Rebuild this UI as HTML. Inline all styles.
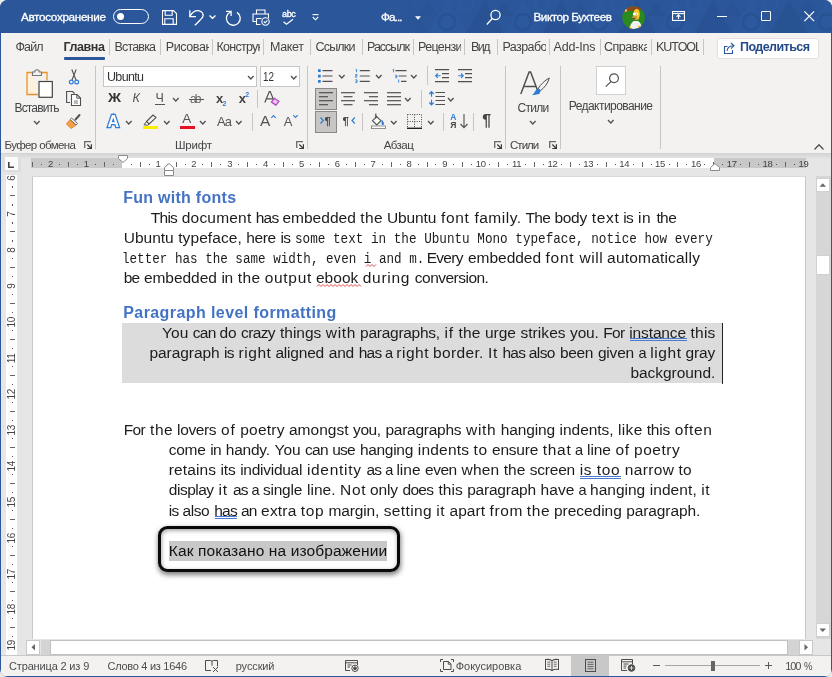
<!DOCTYPE html>
<html lang="ru">
<head>
<meta charset="utf-8">
<title>Word</title>
<style>
*{box-sizing:border-box;margin:0;padding:0}
html,body{width:832px;height:677px;overflow:hidden;background:#ececec}
body{font-family:"Liberation Sans",sans-serif;color:#444;position:relative}
.abs,.win *{position:absolute}
.win{position:absolute;left:0;top:0;width:832px;height:677px;background:#2b579a;border-radius:8px;overflow:hidden;will-change:transform}
.t{white-space:nowrap;line-height:1}
svg{overflow:visible}

/* title bar */
#title{left:0;top:0;width:832px;height:33px;background:#2b579a}
#title .t{color:#fff;font-size:12px;-webkit-text-stroke:0.300px #fff}

/* tabs */
#tabs{left:1px;top:33px;width:830px;height:28px;background:#f3f2f1}
#tabs .tab{top:8px;font-size:13px;color:#444;white-space:nowrap;overflow:hidden;height:16px;line-height:14px;letter-spacing:-0.2px}
#tabs .sep{top:6px;width:1px;height:16px;background:#c8c6c4}

/* ribbon */
#ribbon{left:1px;top:61px;width:830px;height:92px;background:#f3f2f1}
#ribbon .gsep{top:5px;width:1px;height:83px;background:#c8c6c4}
#ribbon .glabel{top:79px;font-size:11px;color:#444;white-space:nowrap;line-height:12px;letter-spacing:0.35px}
#ribbon .lbl{font-size:12px;color:#444;white-space:nowrap;line-height:12px}

/* ruler area */
#rulerbar{left:1px;top:152.500px;width:830px;height:18.500px;background:linear-gradient(#d2d2d2 0,#dcdcdc 3px,#e3e3e3 5.500px,#e6e6e6 6px);z-index:3}

/* doc */
#doc{left:1px;top:171px;width:830px;height:484px;background:#e6e6e6}
#page{left:32px;top:0;width:773px;height:468px;background:#fff;border-left:1px solid #c6c6c6;border-right:1px solid #c6c6c6}
.ln{white-space:nowrap;font-size:16px;line-height:20px;height:20px;color:#1a1a1a}
.mono{font-family:"Liberation Mono",monospace;position:static!important}
.h{font-weight:bold;color:#3f6fc6}

/* status */
#status{left:1px;top:655px;width:830px;height:21px;background:#f3f2f1;border-top:1px solid #c8c8c8}
#status .t{font-size:11px;color:#444;top:5px}
</style>
</head>
<body>
<div class="win">

<div id="title">
<!-- faint pattern -->
<svg style="left:390px;top:0" width="442" height="33" viewBox="0 0 442 33">
<defs><pattern id="tp" width="76" height="33" patternUnits="userSpaceOnUse">
<polygon points="0,33 19,0 38,33" fill="#244c8a"/>
<polygon points="38,33 57,0 76,33" fill="#2f5ea3"/>
<polygon points="19,0 57,0 38,33" fill="#27529200"/>
<polygon points="28,16 38,0 48,16" fill="#244c8a" opacity=".8"/>
<circle cx="57" cy="22" r="8" fill="none" stroke="#244c8a" stroke-width="3"/>
<circle cx="0" cy="4" r="7" fill="none" stroke="#2f5ea3" stroke-width="2.500"/>
<circle cx="76" cy="4" r="7" fill="none" stroke="#2f5ea3" stroke-width="2.500"/>
</pattern>
<linearGradient id="tg" x1="0" x2="1" y1="0" y2="0"><stop offset="0" stop-color="#fff" stop-opacity="0"/><stop offset=".12" stop-color="#fff" stop-opacity="1"/></linearGradient>
<mask id="tm"><rect width="442" height="33" fill="url(#tg)"/></mask></defs>
<rect width="442" height="33" fill="url(#tp)" opacity=".38" mask="url(#tm)"/>
</svg>
<div class="t" style="left:21.00px;top:11.00px;font-size:11.7px;letter-spacing:-0.322px;color:#fff;">Автосохранение</div>
<div style="left:113px;top:9px;width:36px;height:15px;border:1px solid #fff;border-radius:8px"></div>
<div style="left:117px;top:13px;width:7px;height:7px;border-radius:50%;background:#fff"></div>
<!-- save -->
<svg style="left:161px;top:10px" width="16" height="15" viewBox="0 0 16 15" fill="none" stroke="#fff" stroke-width="1.1"><path d="M1.5 0.6h11l3 3v10.8h-14z"/><path d="M4.2 0.6v4.6h7v-4.6"/><path d="M3.8 14.4v-5.6h8.4v5.6"/></svg>
<!-- undo -->
<svg style="left:189px;top:10px" width="16" height="16" viewBox="0 0 16 16" fill="none" stroke="#fff" stroke-width="1.3"><path d="M0.800 0.300v6.300h6.200"/><path d="M1 6.300C3 2.600 6.800 0.200 10.300 0.800c3 0.600 4.500 3.400 3.500 5.900c-0.700 1.700-3 3.700-8.100 8.700"/></svg>
<svg style="left:208.500px;top:14.700px" width="7" height="4" viewBox="0 0 7 4" fill="none" stroke="#fff" stroke-width="1.3"><path d="M0.500 0.500l3 2.800 3-2.800"/></svg>
<!-- redo -->
<svg style="left:224px;top:9px" width="18" height="18" viewBox="0 0 18 18" fill="none" stroke="#fff" stroke-width="1.3"><path d="M12.98 3.41A6.95 6.95 0 1 1 6.70 2.86"/><path d="M2 2.400h5.100v4.700"/></svg>
<!-- print preview -->
<svg style="left:252px;top:9px" width="19" height="17" viewBox="0 0 19 17" fill="none" stroke="#fff" stroke-width="1.1"><path d="M4.500 5v-4h8.500v4"/><path d="M4 12.500h-3v-7.500h15.500v4"/><path d="M4.500 9.500v6h4"/><path d="M4.500 9.500h5"/><circle cx="13.500" cy="12.500" r="3.700"/><path d="M11.800 12.500l1.300 1.300 2.300-2.500"/></svg>
<!-- abc check -->
<div class="t" style="left:282px;top:9.500px;font-size:9px;letter-spacing:-0.35px">abc</div>
<svg style="left:282.500px;top:19px" width="11" height="6" viewBox="0 0 11 6" fill="none" stroke="#fff" stroke-width="1.2"><path d="M0.500 2.800l3 2.500 6.500-5"/></svg>
<!-- customize -->
<svg style="left:312px;top:13.500px" width="7" height="7" viewBox="0 0 7 7" fill="none" stroke="#fff" stroke-width="1.1"><path d="M0.500 0.600h6"/><path d="M0.800 3l2.700 2.800 2.700-2.800"/></svg>
<div class="t" style="left:381.00px;top:11.00px;font-size:11.7px;letter-spacing:-0.913px;color:#fff;">Фа...</div>
<svg style="left:415px;top:15.500px" width="6" height="4" viewBox="0 0 6 4"><path d="M0 0.300h6l-3 3.500z" fill="#fff"/></svg>
<!-- search -->
<svg style="left:486px;top:9px" width="16" height="17" viewBox="0 0 16 17" fill="none" stroke="#fff" stroke-width="1.3"><circle cx="9.500" cy="6" r="4.600"/><path d="M6.300 9.500l-5.500 6"/></svg>
<div class="t" style="left:533.50px;top:11.00px;font-size:11.7px;letter-spacing:-0.464px;color:#fff;">Виктор Бухтеев</div>
<!-- avatar -->
<svg style="left:622px;top:5.500px" width="23.200" height="23.200" viewBox="0 0 23.200 23.200"><defs><clipPath id="av"><circle cx="11.600" cy="11.600" r="11.300"/></clipPath></defs><g clip-path="url(#av)"><rect width="24" height="24" fill="#2b8a1d"/><path d="M0 0h24v5.200c-3-2-6-1.800-9-0.800c-3 1-6 0.300-8 0.500c-3 0.300-5 1-7 2z" fill="#8b4a20"/><ellipse cx="3.800" cy="4.300" rx="1.300" ry="1.600" fill="#e8b58a"/><ellipse cx="14.700" cy="8.300" rx="3.100" ry="5.600" fill="#f7c81a"/><ellipse cx="12.700" cy="11.800" rx="2.500" ry="2.200" fill="#c79a3c"/><path d="M10.600 12.300h2.500v0.900h-2.500z" fill="#3a2a10"/><circle cx="12.300" cy="8.100" r="1.500" fill="#fff"/><circle cx="14.700" cy="7.900" r="1.400" fill="#fff"/><circle cx="14.300" cy="8" r="0.450" fill="#222"/><path d="M7.500 23.500c0.300-4.500 2-7.300 4.200-8.600h4.300c2.500 1.500 3.800 4 3.800 8.600z" fill="#f1f1f1"/><ellipse cx="17.300" cy="20.600" rx="1.800" ry="1" fill="#f7c81a"/><ellipse cx="8.300" cy="21.500" rx="0.900" ry="1" fill="#f7c81a"/></g></svg>
<!-- ribbon display -->
<svg style="left:672px;top:11px" width="13" height="10" viewBox="0 0 13 10" fill="none" stroke="#fff" stroke-width="1.100"><rect x="0.550" y="0.550" width="11.900" height="8.900"/><path d="M0.500 2.600h12"/><path d="M6.500 8v-4M4.500 5.800l2-2 2 2"/></svg>
<!-- min max close -->
<div style="left:717px;top:16px;width:10px;height:1px;background:#fff"></div>
<div style="left:761px;top:11px;width:10px;height:10px;border:1px solid #fff;border-radius:1px"></div>
<svg style="left:804px;top:11px" width="10.500" height="10.500" viewBox="0 0 10.500 10.500" stroke="#fff" stroke-width="1.200"><path d="M0.400 0.400l9.700 9.700M10.100 0.400l-9.700 9.700"/></svg>
</div>
<div id="tabs">
<div class="t" style="left:14.50px;top:8.42px;font-size:12.5px;letter-spacing:-0.910px;">Файл</div>
<div class="t" style="left:113.50px;top:8.42px;font-size:12.5px;letter-spacing:-0.827px;">Вставка</div>
<div class="t" style="left:269.00px;top:8.42px;font-size:12.5px;letter-spacing:-0.344px;">Макет</div>
<div class="t" style="left:314.50px;top:8.42px;font-size:12.5px;letter-spacing:-0.801px;">Ссылки</div>
<div class="t" style="left:470.00px;top:8.42px;font-size:12.5px;letter-spacing:-1.557px;">Вид</div>
<div class="t" style="left:552.50px;top:8.42px;font-size:12.5px;letter-spacing:-0.180px;">Add-Ins</div>
<div class="t" style="left:164.75px;top:8.42px;font-size:12.5px;letter-spacing:-0.394px;width:43.200px;overflow:hidden;height:15px;">Рисование</div>
<div class="t" style="left:215.50px;top:8.42px;font-size:12.5px;letter-spacing:-0.739px;width:43.200px;overflow:hidden;height:15px;">Конструктор</div>
<div class="t" style="left:366.00px;top:8.42px;font-size:12.5px;letter-spacing:-1.025px;width:43.200px;overflow:hidden;height:15px;">Рассылки</div>
<div class="t" style="left:417.00px;top:8.42px;font-size:12.5px;letter-spacing:-0.641px;width:43.200px;overflow:hidden;height:15px;">Рецензирование</div>
<div class="t" style="left:501.50px;top:8.42px;font-size:12.5px;letter-spacing:-0.588px;width:43.200px;overflow:hidden;height:15px;">Разработчик</div>
<div class="t" style="left:603.00px;top:8.42px;font-size:12.5px;letter-spacing:-0.468px;width:43.200px;overflow:hidden;height:15px;">Справка</div>
<div class="t" style="left:655.00px;top:8.42px;font-size:12.5px;letter-spacing:-1.044px;width:43.200px;overflow:hidden;height:15px;">KUTOOLS</div>
<div class="t" style="left:62.50px;top:8.42px;font-size:12.5px;font-weight:bold;letter-spacing:-0.424px;color:#333;width:41.300px;overflow:hidden;height:15px;">Главная</div>
<div style="left:62.5px;top:24px;width:41.5px;height:2.5px;background:#2b579a;border-radius:1px"></div>
<div class="sep" style="left:108.0px"></div>
<div class="sep" style="left:158.5px"></div>
<div class="sep" style="left:211.0px"></div>
<div class="sep" style="left:261.75px"></div>
<div class="sep" style="left:308.75px"></div>
<div class="sep" style="left:360.5px"></div>
<div class="sep" style="left:411.5px"></div>
<div class="sep" style="left:463.0px"></div>
<div class="sep" style="left:495.5px"></div>
<div class="sep" style="left:548.0px"></div>
<div class="sep" style="left:598.5px"></div>
<div class="sep" style="left:649.5px"></div>
<div class="sep" style="left:702.0px"></div>
<div style="left:716px;top:4.5px;width:102px;height:21px;background:#fff;border:1px solid #e3e1df;border-radius:3px"></div>
<svg style="left:723px;top:9px" width="11" height="12" viewBox="0 0 11 12" fill="none" stroke="#2b579a" stroke-width="1.1"><path d="M3.500 4.500h-3v7h8v-3.500"/><path d="M3 9c0.500-3 2.500-5 6-5.200"/><path d="M7 1l3 2.800-3 2.800"/></svg>
<div class="t" style="left:739.00px;top:8.42px;font-size:12.5px;font-weight:bold;letter-spacing:-0.558px;color:#244a86;">Поделиться</div>
</div>
<div id="ribbon">
<svg style="left:25.00px;top:8.00px" width="27" height="29" viewBox="0 0 27 29" ><path d="M6.500 3.500h-5.500v22h11" fill="#fdf0dd" stroke="#e8912d" stroke-width="1.300"/><path d="M15 3.500h6v8" fill="none" stroke="#e8912d" stroke-width="1.300"/><path d="M6.500 6.500v-3.500h2.200a2.300 2.300 0 0 1 4.600 0h2.200v3.500z" fill="#f3f2f1" stroke="#777" stroke-width="1.100"/><rect x="13" y="12.500" width="13.300" height="15.800" fill="#fff" stroke="#444" stroke-width="1.200"/></svg>
<div class="t" style="left:13.50px;top:40.84px;font-size:12px;letter-spacing:-0.838px;">Вставить</div>
<svg style="left:32.95px;top:59.80px" width="5.6" height="3" viewBox="0 0 5.6 3" fill="none" stroke="#505050" stroke-width="1.3"><path d="M0 0l2.8 3 2.8-3"/></svg>
<svg style="left:67.50px;top:7.50px" width="10" height="16" viewBox="0 0 10 16" ><path d="M2.800 0.500l4.200 10.500M7.200 0.500l-4.200 10.500" fill="none" stroke="#505050" stroke-width="1.100"/><circle cx="2.300" cy="13" r="1.900" fill="none" stroke="#2e7cd6" stroke-width="1.200"/><circle cx="7.700" cy="13" r="1.900" fill="none" stroke="#2e7cd6" stroke-width="1.200"/></svg>
<svg style="left:64.50px;top:30.00px" width="16" height="15" viewBox="0 0 16 15" ><path d="M4 11.500h-3.400v-11h6l2 2" fill="none" stroke="#505050" stroke-width="1.100"/><path d="M5.500 3.500h5.500l3.500 3.500v7.500h-9z" fill="#fff" stroke="#505050" stroke-width="1.100"/><path d="M10.800 3.700v3.500h3.500" fill="none" stroke="#505050" stroke-width="1"/><path d="M8 10h4M8 12h4" stroke="#505050" stroke-width="0.800"/></svg>
<svg style="left:65.00px;top:52.50px" width="15" height="15" viewBox="0 0 15 15" ><path d="M9.500 5.500l4-4.500" stroke="#555" stroke-width="2" stroke-linecap="round"/><path d="M5.500 4l6 5.500-1.300 1.500-6-5.500z" fill="#fff" stroke="#555" stroke-width="0.900"/><path d="M3.800 6l5.800 5.300-4.600 3.200-4.500-4.500z" fill="#f4a14a" stroke="#e07d1f" stroke-width="0.900"/></svg>
<div class="t" style="left:3.50px;top:79.27px;font-size:11.5px;letter-spacing:-0.604px;">Буфер обмена</div>
<svg style="left:83.00px;top:80.00px" width="8" height="8" viewBox="0 0 8 8" ><path d="M0.700 7v-6.300h6.300" fill="none" stroke="#6a6a6a" stroke-width="1.300"/><path d="M3.300 3.500l4 4M7.400 3.300v4.200h-4.200" fill="none" stroke="#3c3c3c" stroke-width="1.200"/></svg>
<div style="left:93.75px;top:5.00px;width:1px;height:83.00px;background:#c8c6c4"></div>
<div style="left:102px;top:5px;width:153.500px;height:20.500px;background:#fff;border:1px solid #c8c6c4"></div>
<div class="t" style="left:106.00px;top:10.42px;font-size:12.5px;letter-spacing:-0.662px;color:#333;">Ubuntu</div>
<svg style="left:246.95px;top:14.80px" width="5.6" height="3" viewBox="0 0 5.6 3" fill="none" stroke="#505050" stroke-width="1.3"><path d="M0 0l2.8 3 2.8-3"/></svg>
<div style="left:258.5px;top:5px;width:40.500px;height:20.500px;background:#fff;border:1px solid #c8c6c4"></div>
<div class="t" style="left:261.50px;top:9.84px;font-size:12px;transform:scaleX(0.8241);transform-origin:0 0;color:#333;">12</div>
<svg style="left:289.70px;top:14.80px" width="5.6" height="3" viewBox="0 0 5.6 3" fill="none" stroke="#505050" stroke-width="1.3"><path d="M0 0l2.8 3 2.8-3"/></svg>
<div class="t" style="left:106.50px;top:30.37px;font-size:13.5px;font-weight:bold;transform:scaleX(1.0654);transform-origin:0 0;color:#333;">Ж</div>
<div class="t" style="left:131.50px;top:31.22px;font-size:12.5px;font-style:italic;color:#555;">К</div>
<div class="t" style="left:154.50px;top:30.92px;font-size:12.5px;color:#555;">Ч</div>
<div style="left:154px;top:43px;width:9.500px;height:1px;background:#555"></div>
<svg style="left:172.20px;top:36.50px" width="5.6" height="3" viewBox="0 0 5.6 3" fill="none" stroke="#505050" stroke-width="1.3"><path d="M0 0l2.8 3 2.8-3"/></svg>
<div class="t" style="left:189.00px;top:31.84px;font-size:12px;letter-spacing:-1.848px;color:#666;">ab</div>
<div style="left:187.5px;top:37.5px;width:15px;height:1px;background:#555"></div>
<div class="t" style="left:215.00px;top:31.00px;font-size:13px;font-weight:bold;color:#444;">x</div>
<div class="t" style="left:221.50px;top:39.07px;font-size:7px;font-weight:bold;color:#2e7cd6;">2</div>
<div class="t" style="left:237.75px;top:31.00px;font-size:13px;font-weight:bold;color:#444;">x</div>
<div class="t" style="left:244.30px;top:30.07px;font-size:7px;font-weight:bold;color:#2e7cd6;">2</div>
<div style="left:255.50px;top:29.00px;width:1px;height:17.50px;background:#c8c6c4"></div>
<svg style="left:262.50px;top:30.00px" width="16" height="15" viewBox="0 0 16 15" ><path d="M0.800 11.500l4.500-11h0.900l4.500 11M2.500 7.800h6.500" fill="none" stroke="#505050" stroke-width="1.200"/><path d="M10.300 7.300l4.600 3-3 3.800-4.500-3z" fill="#ebc6f0" stroke="#b144c0" stroke-width="1.200"/></svg>
<div class="t" style="left:106.60px;top:52.76px;font-size:16px;font-weight:bold;color:#fff;-webkit-text-stroke:2.600px #2e7cd6;paint-order:stroke fill;">A</div>
<svg style="left:124.70px;top:59.50px" width="5.6" height="3" viewBox="0 0 5.6 3" fill="none" stroke="#505050" stroke-width="1.3"><path d="M0 0l2.8 3 2.8-3"/></svg>
<svg style="left:142.00px;top:52.50px" width="15" height="12" viewBox="0 0 15 12" ><path d="M3.500 7.500l6.500-6.500 3 2.600-6.800 6.400z" fill="none" stroke="#505050" stroke-width="1.100"/><path d="M3.500 7.500l-2.500 3.300 3.700 0.400 1.500-1.200" fill="none" stroke="#505050" stroke-width="1"/></svg>
<div style="left:141.5px;top:64.5px;width:15px;height:3px;background:#ffed00"></div>
<svg style="left:162.70px;top:59.50px" width="5.6" height="3" viewBox="0 0 5.6 3" fill="none" stroke="#505050" stroke-width="1.3"><path d="M0 0l2.8 3 2.8-3"/></svg>
<div class="t" style="left:181.30px;top:51.17px;font-size:13.5px;color:#555;">A</div>
<div style="left:178.5px;top:64.5px;width:15px;height:3px;background:#e81123"></div>
<svg style="left:198.70px;top:59.50px" width="5.6" height="3" viewBox="0 0 5.6 3" fill="none" stroke="#505050" stroke-width="1.3"><path d="M0 0l2.8 3 2.8-3"/></svg>
<div class="t" style="left:216.00px;top:54.00px;font-size:13px;letter-spacing:-0.901px;color:#555;">Aa</div>
<svg style="left:234.95px;top:59.50px" width="5.6" height="3" viewBox="0 0 5.6 3" fill="none" stroke="#505050" stroke-width="1.3"><path d="M0 0l2.8 3 2.8-3"/></svg>
<div style="left:250.50px;top:51.50px;width:1px;height:18.50px;background:#c8c6c4"></div>
<div class="t" style="left:259.00px;top:51.88px;font-size:15.5px;color:#555;">A</div>
<svg style="left:269.50px;top:53.50px" width="5" height="3" viewBox="0 0 5 3" ><path d="M0.300 2.800l2.200-2.300 2.200 2.300" fill="none" stroke="#2e7cd6" stroke-width="1.100"/></svg>
<div class="t" style="left:282.75px;top:54.00px;font-size:13px;color:#555;">A</div>
<svg style="left:291.50px;top:54.00px" width="5" height="3" viewBox="0 0 5 3" ><path d="M0.300 0.200l2.200 2.300 2.200-2.300" fill="none" stroke="#2e7cd6" stroke-width="1.100"/></svg>
<div class="t" style="left:174.00px;top:79.27px;font-size:11.5px;letter-spacing:-0.209px;">Шрифт</div>
<svg style="left:294.50px;top:80.00px" width="8" height="8" viewBox="0 0 8 8" ><path d="M0.700 7v-6.300h6.300" fill="none" stroke="#6a6a6a" stroke-width="1.300"/><path d="M3.300 3.500l4 4M7.400 3.300v4.200h-4.200" fill="none" stroke="#3c3c3c" stroke-width="1.200"/></svg>
<div style="left:305.50px;top:5.00px;width:1px;height:83.00px;background:#c8c6c4"></div>
<svg style="left:316.50px;top:7.50px" width="15" height="14" viewBox="0 0 15 14" ><path d="M0 0.300h2.700v2.700h-2.700zM0 5.700h2.700v2.700h-2.700zM0 11.100h2.700v2.700h-2.700z" fill="#2e7cd6"/><path d="M4.500 1.600h10M4.500 7h10M4.500 12.400h10" stroke="#505050" stroke-width="1.200"/></svg>
<svg style="left:337.95px;top:13.80px" width="5.6" height="3" viewBox="0 0 5.6 3" fill="none" stroke="#505050" stroke-width="1.3"><path d="M0 0l2.8 3 2.8-3"/></svg>
<svg style="left:353.50px;top:7.50px" width="15" height="14" viewBox="0 0 15 14" ><path d="M4.800 1.600h10M4.800 7h10M4.800 12.400h10" stroke="#505050" stroke-width="1.200"/><path d="M0.600 0.800l1-0.500v3M0.300 5.500h1.700v1.300h-1.500v1.300h1.700M0.300 10.800h1.700v2.800h-1.700M0.700 12.200h1.300" fill="none" stroke="#2e7cd6" stroke-width="0.850"/></svg>
<svg style="left:374.95px;top:13.80px" width="5.6" height="3" viewBox="0 0 5.6 3" fill="none" stroke="#505050" stroke-width="1.3"><path d="M0 0l2.8 3 2.8-3"/></svg>
<svg style="left:391.00px;top:7.50px" width="15" height="14" viewBox="0 0 15 14" ><path d="M3.500 1.600h11M6.500 7h8M9 12.400h5.500" stroke="#505050" stroke-width="1.200"/><path d="M0.600 0.800l1-0.500v3" fill="none" stroke="#2e7cd6" stroke-width="0.850"/><path d="M3.200 6.200h1.600v2.600M3.200 7.500h1.600M3.200 8.800h1.600" fill="none" stroke="#2e7cd6" stroke-width="0.800"/><path d="M6.700 10.500v3M6.700 11.200v0" fill="none" stroke="#2e7cd6" stroke-width="0.900"/></svg>
<svg style="left:409.95px;top:13.80px" width="5.6" height="3" viewBox="0 0 5.6 3" fill="none" stroke="#505050" stroke-width="1.3"><path d="M0 0l2.8 3 2.8-3"/></svg>
<div style="left:425.50px;top:5.00px;width:1px;height:19.00px;background:#c8c6c4"></div>
<svg style="left:434.00px;top:7.50px" width="14" height="14" viewBox="0 0 14 14" ><path d="M0 0.700h14M7 4.700h7M7 8.700h7M0 12.700h14" stroke="#505050" stroke-width="1.200"/><path d="M5.500 6.700h-4.800M2.800 4.500l-2.200 2.200 2.200 2.200" fill="none" stroke="#2e7cd6" stroke-width="1.100"/></svg>
<svg style="left:457.00px;top:7.50px" width="14" height="14" viewBox="0 0 14 14" ><path d="M0 0.700h14M7 4.700h7M7 8.700h7M0 12.700h14" stroke="#505050" stroke-width="1.200"/><path d="M0.300 6.700h4.800M3 4.500l2.200 2.200-2.200 2.200" fill="none" stroke="#2e7cd6" stroke-width="1.100"/></svg>
<div style="left:314px;top:27px;width:21.500px;height:21.500px;background:#c8c6c4;border:1px solid #8a8886"></div>
<svg style="left:317.75px;top:31.00px" width="14" height="14" viewBox="0 0 14 14" ><path d="M0 0.7H14" stroke="#505050" stroke-width="1.200"/><path d="M0 4.7H9" stroke="#505050" stroke-width="1.200"/><path d="M0 8.7H14" stroke="#505050" stroke-width="1.200"/><path d="M0 12.7H9" stroke="#505050" stroke-width="1.200"/></svg>
<svg style="left:340.25px;top:31.00px" width="14" height="14" viewBox="0 0 14 14" ><path d="M0 0.7H14" stroke="#505050" stroke-width="1.200"/><path d="M2.5 4.7H11.5" stroke="#505050" stroke-width="1.200"/><path d="M0 8.7H14" stroke="#505050" stroke-width="1.200"/><path d="M2.5 12.7H11.5" stroke="#505050" stroke-width="1.200"/></svg>
<svg style="left:362.75px;top:31.00px" width="14" height="14" viewBox="0 0 14 14" ><path d="M0 0.7H14" stroke="#505050" stroke-width="1.200"/><path d="M5 4.7H14" stroke="#505050" stroke-width="1.200"/><path d="M0 8.7H14" stroke="#505050" stroke-width="1.200"/><path d="M5 12.7H14" stroke="#505050" stroke-width="1.200"/></svg>
<svg style="left:386.00px;top:31.00px" width="14" height="14" viewBox="0 0 14 14" ><path d="M0 0.7H14" stroke="#505050" stroke-width="1.200"/><path d="M0 4.7H14" stroke="#505050" stroke-width="1.200"/><path d="M0 8.7H14" stroke="#505050" stroke-width="1.200"/><path d="M0 12.7H14" stroke="#505050" stroke-width="1.200"/></svg>
<svg style="left:404.20px;top:36.50px" width="5.6" height="3" viewBox="0 0 5.6 3" fill="none" stroke="#505050" stroke-width="1.3"><path d="M0 0l2.8 3 2.8-3"/></svg>
<div style="left:419.50px;top:29.00px;width:1px;height:17.50px;background:#c8c6c4"></div>
<svg style="left:427.75px;top:30.00px" width="16" height="15" viewBox="0 0 16 15" ><path d="M6.500 1.500h9.500M6.500 5.500h9.500M6.500 9.500h9.500M6.500 13.500h9.500" stroke="#505050" stroke-width="1.200"/><path d="M2.500 0.800v5M0.300 3l2.200-2.300 2.200 2.300M2.500 8.700v5M0.300 11.500l2.200 2.300 2.200-2.300" fill="none" stroke="#2e7cd6" stroke-width="1.200"/></svg>
<svg style="left:447.20px;top:36.50px" width="5.6" height="3" viewBox="0 0 5.6 3" fill="none" stroke="#505050" stroke-width="1.3"><path d="M0 0l2.8 3 2.8-3"/></svg>
<div style="left:314px;top:50px;width:21.500px;height:21.500px;background:#c8c6c4;border:1px solid #8a8886"></div>
<svg style="left:318.50px;top:56.00px" width="5" height="7" viewBox="0 0 5 7" ><path d="M0.500 0.500l2.800 3-2.800 3" fill="none" stroke="#2e7cd6" stroke-width="1.200"/></svg>
<div class="t" style="left:323.50px;top:55.27px;font-size:11.5px;font-weight:bold;color:#444;">¶</div>
<div class="t" style="left:341.50px;top:55.27px;font-size:11.5px;font-weight:bold;color:#444;">¶</div>
<svg style="left:349.50px;top:56.00px" width="5" height="7" viewBox="0 0 5 7" ><path d="M3.800 0.500l-2.800 3 2.800 3" fill="none" stroke="#2e7cd6" stroke-width="1.200"/></svg>
<div style="left:361.00px;top:51.50px;width:1px;height:18.50px;background:#c8c6c4"></div>
<svg style="left:369.50px;top:52.00px" width="15" height="16" viewBox="0 0 15 16" ><path d="M4.500 2.500l5.500 5.200-4.200 4.200-4.300-4.200 4.300-4.200" fill="#fff" stroke="#505050" stroke-width="1.100"/><path d="M4.800 0.500v5" stroke="#505050" stroke-width="1.100"/><path d="M10.500 6.500c2 2 2.500 3.200 2.500 4.300a1.200 1.200 0 0 1-2.400 0c0-1 0.200-2.300-0.100-4.300" fill="#2e7cd6"/><rect x="0.500" y="13" width="14" height="2.600" fill="#fff" stroke="#777" stroke-width="0.800"/></svg>
<svg style="left:389.95px;top:59.50px" width="5.6" height="3" viewBox="0 0 5.6 3" fill="none" stroke="#505050" stroke-width="1.3"><path d="M0 0l2.8 3 2.8-3"/></svg>
<svg style="left:406.00px;top:52.50px" width="15" height="15" viewBox="0 0 15 15" ><path d="M0.500 0.500h14M0.500 0.500v14M14.500 0.500v14M7.500 0.500v14M0.500 7.500h14" fill="none" stroke="#505050" stroke-width="1" stroke-dasharray="1 1.300"/><path d="M0 14.300h15" stroke="#222" stroke-width="1.400"/></svg>
<svg style="left:427.20px;top:59.50px" width="5.6" height="3" viewBox="0 0 5.6 3" fill="none" stroke="#505050" stroke-width="1.3"><path d="M0 0l2.8 3 2.8-3"/></svg>
<div style="left:442.25px;top:51.50px;width:1px;height:18.50px;background:#c8c6c4"></div>
<div class="t" style="left:449.30px;top:52.30px;font-size:8.5px;font-weight:bold;color:#2e7cd6;">A</div>
<div class="t" style="left:449.30px;top:60.30px;font-size:8.5px;font-weight:bold;color:#444;">Я</div>
<svg style="left:458.50px;top:53.00px" width="8" height="15" viewBox="0 0 8 15" ><path d="M4 0v13.500M0.500 10l3.500 3.700 3.500-3.700" fill="none" stroke="#505050" stroke-width="1.100"/></svg>
<div style="left:471.50px;top:51.50px;width:1px;height:18.50px;background:#c8c6c4"></div>
<div class="t" style="left:481.30px;top:51.76px;font-size:16px;font-weight:bold;color:#444;">¶</div>
<div class="t" style="left:382.75px;top:79.27px;font-size:11.5px;letter-spacing:-0.565px;">Абзац</div>
<svg style="left:493.00px;top:80.00px" width="8" height="8" viewBox="0 0 8 8" ><path d="M0.700 7v-6.300h6.300" fill="none" stroke="#6a6a6a" stroke-width="1.300"/><path d="M3.300 3.500l4 4M7.400 3.300v4.200h-4.200" fill="none" stroke="#3c3c3c" stroke-width="1.200"/></svg>
<div style="left:504.00px;top:5.00px;width:1px;height:83.00px;background:#c8c6c4"></div>
<svg style="left:518.50px;top:9.50px" width="30" height="25" viewBox="0 0 30 25" ><path d="M0.800 23l8.300-22h1.500l8.300 22M3.800 15.500h12" fill="none" stroke="#505050" stroke-width="1.500"/><path d="M29.300 7c-1.500 5.500-4.800 9.800-8.800 12.500l-2.300-2c2.800-4.500 6.500-8 11.100-10.500z" fill="#f3f2f1" stroke="#505050" stroke-width="1"/><path d="M18 17.300l2.700 2.300c-0.300 3-3.500 5-8.700 4.300 3-1.200 2.800-5.200 6-6.600z" fill="#2e7cd6"/></svg>
<div class="t" style="left:516.50px;top:40.84px;font-size:12px;letter-spacing:-0.705px;">Стили</div>
<svg style="left:528.70px;top:59.80px" width="5.6" height="3" viewBox="0 0 5.6 3" fill="none" stroke="#505050" stroke-width="1.3"><path d="M0 0l2.8 3 2.8-3"/></svg>
<div class="t" style="left:509.00px;top:79.27px;font-size:11.5px;letter-spacing:-0.970px;">Стили</div>
<svg style="left:548.00px;top:80.00px" width="8" height="8" viewBox="0 0 8 8" ><path d="M0.700 7v-6.300h6.300" fill="none" stroke="#6a6a6a" stroke-width="1.300"/><path d="M3.300 3.500l4 4M7.400 3.300v4.200h-4.200" fill="none" stroke="#3c3c3c" stroke-width="1.200"/></svg>
<div style="left:558.75px;top:5.00px;width:1px;height:83.00px;background:#c8c6c4"></div>
<div style="left:595.25px;top:4.5px;width:29.500px;height:29px;background:#fff;border:1px solid #d2d0ce"></div>
<svg style="left:603.50px;top:11.50px" width="15" height="14" viewBox="0 0 15 14" ><circle cx="9" cy="5.300" r="4.400" fill="none" stroke="#505050" stroke-width="1.200"/><path d="M6 8.600l-5.300 5" stroke="#505050" stroke-width="1.200"/></svg>
<div class="t" style="left:567.75px;top:38.84px;font-size:12px;letter-spacing:-0.551px;">Редактирование</div>
<svg style="left:606.70px;top:58.50px" width="5.6" height="3" viewBox="0 0 5.6 3" fill="none" stroke="#505050" stroke-width="1.3"><path d="M0 0l2.8 3 2.8-3"/></svg>
<div style="left:659.00px;top:5.00px;width:1px;height:83.00px;background:#c8c6c4"></div>
<svg style="left:812.50px;top:83.00px" width="10" height="6" viewBox="0 0 10 6" ><path d="M0.500 5.500l4.500-4.700 4.500 4.700" fill="none" stroke="#505050" stroke-width="1.300"/></svg>
</div>
<div id="rulerbar">
<div style="left:0.6000000000000001px;top:1.5px;width:19.700px;height:18px;background:#dedede"></div>
<div style="left:3.7px;top:4.800000000000011px;width:13.500px;height:12.400px;background:#fbfbfb"></div>
<svg style="left:7.300000000000001px;top:9.300000000000011px" width="6" height="6" viewBox="0 0 6 6"><path d="M0.800 0v5.200h5.200" fill="none" stroke="#444" stroke-width="1.600"/></svg>
<div style="left:30px;top:5.5px;width:774.700px;height:10px;background:#fff"></div>
<div style="left:30px;top:5.5px;width:91px;height:10px;background:#c8c8c8"></div>
<div style="left:712.7px;top:5.5px;width:92px;height:10px;background:#c8c8c8"></div>
<div style="left:31.17px;top:9.5px;width:1px;height:4.500px;background:#666"></div>
<div style="left:40.14px;top:11.0px;width:1px;height:1.500px;background:#555"></div>
<div class="t" style="left:46.96px;top:6.46px;font-size:9.5px;color:#444;">2</div>
<div style="left:58.06px;top:11.0px;width:1px;height:1.500px;background:#555"></div>
<div style="left:67.02px;top:9.5px;width:1px;height:4.500px;background:#666"></div>
<div style="left:75.99px;top:11.0px;width:1px;height:1.500px;background:#555"></div>
<div class="t" style="left:82.81px;top:6.46px;font-size:9.5px;color:#444;">1</div>
<div style="left:93.91px;top:11.0px;width:1px;height:1.500px;background:#555"></div>
<div style="left:102.88px;top:9.5px;width:1px;height:4.500px;background:#666"></div>
<div style="left:111.84px;top:11.0px;width:1px;height:1.500px;background:#555"></div>
<div style="left:129.76px;top:11.0px;width:1px;height:1.500px;background:#555"></div>
<div style="left:138.72px;top:9.5px;width:1px;height:4.500px;background:#666"></div>
<div style="left:147.69px;top:11.0px;width:1px;height:1.500px;background:#555"></div>
<div class="t" style="left:154.51px;top:6.46px;font-size:9.5px;color:#444;">1</div>
<div style="left:165.61px;top:11.0px;width:1px;height:1.500px;background:#555"></div>
<div style="left:174.57px;top:9.5px;width:1px;height:4.500px;background:#666"></div>
<div style="left:183.54px;top:11.0px;width:1px;height:1.500px;background:#555"></div>
<div class="t" style="left:190.36px;top:6.46px;font-size:9.5px;color:#444;">2</div>
<div style="left:201.46px;top:11.0px;width:1px;height:1.500px;background:#555"></div>
<div style="left:210.43px;top:9.5px;width:1px;height:4.500px;background:#666"></div>
<div style="left:219.39px;top:11.0px;width:1px;height:1.500px;background:#555"></div>
<div class="t" style="left:226.21px;top:6.46px;font-size:9.5px;color:#444;">3</div>
<div style="left:237.31px;top:11.0px;width:1px;height:1.500px;background:#555"></div>
<div style="left:246.28px;top:9.5px;width:1px;height:4.500px;background:#666"></div>
<div style="left:255.24px;top:11.0px;width:1px;height:1.500px;background:#555"></div>
<div class="t" style="left:262.06px;top:6.46px;font-size:9.5px;color:#444;">4</div>
<div style="left:273.16px;top:11.0px;width:1px;height:1.500px;background:#555"></div>
<div style="left:282.12px;top:9.5px;width:1px;height:4.500px;background:#666"></div>
<div style="left:291.09px;top:11.0px;width:1px;height:1.500px;background:#555"></div>
<div class="t" style="left:297.91px;top:6.46px;font-size:9.5px;color:#444;">5</div>
<div style="left:309.01px;top:11.0px;width:1px;height:1.500px;background:#555"></div>
<div style="left:317.98px;top:9.5px;width:1px;height:4.500px;background:#666"></div>
<div style="left:326.94px;top:11.0px;width:1px;height:1.500px;background:#555"></div>
<div class="t" style="left:333.76px;top:6.46px;font-size:9.5px;color:#444;">6</div>
<div style="left:344.86px;top:11.0px;width:1px;height:1.500px;background:#555"></div>
<div style="left:353.82px;top:9.5px;width:1px;height:4.500px;background:#666"></div>
<div style="left:362.79px;top:11.0px;width:1px;height:1.500px;background:#555"></div>
<div class="t" style="left:369.61px;top:6.46px;font-size:9.5px;color:#444;">7</div>
<div style="left:380.71px;top:11.0px;width:1px;height:1.500px;background:#555"></div>
<div style="left:389.68px;top:9.5px;width:1px;height:4.500px;background:#666"></div>
<div style="left:398.64px;top:11.0px;width:1px;height:1.500px;background:#555"></div>
<div class="t" style="left:405.46px;top:6.46px;font-size:9.5px;color:#444;">8</div>
<div style="left:416.56px;top:11.0px;width:1px;height:1.500px;background:#555"></div>
<div style="left:425.53px;top:9.5px;width:1px;height:4.500px;background:#666"></div>
<div style="left:434.49px;top:11.0px;width:1px;height:1.500px;background:#555"></div>
<div class="t" style="left:441.31px;top:6.46px;font-size:9.5px;color:#444;">9</div>
<div style="left:452.41px;top:11.0px;width:1px;height:1.500px;background:#555"></div>
<div style="left:461.38px;top:9.5px;width:1px;height:4.500px;background:#666"></div>
<div style="left:470.34px;top:11.0px;width:1px;height:1.500px;background:#555"></div>
<div class="t" style="left:474.82px;top:6.46px;font-size:9.5px;letter-spacing:-0.3px;color:#444;">10</div>
<div style="left:488.26px;top:11.0px;width:1px;height:1.500px;background:#555"></div>
<div style="left:497.23px;top:9.5px;width:1px;height:4.500px;background:#666"></div>
<div style="left:506.19px;top:11.0px;width:1px;height:1.500px;background:#555"></div>
<div class="t" style="left:511.02px;top:6.46px;font-size:9.5px;letter-spacing:-0.3px;color:#444;">11</div>
<div style="left:524.11px;top:11.0px;width:1px;height:1.500px;background:#555"></div>
<div style="left:533.08px;top:9.5px;width:1px;height:4.500px;background:#666"></div>
<div style="left:542.04px;top:11.0px;width:1px;height:1.500px;background:#555"></div>
<div class="t" style="left:546.52px;top:6.46px;font-size:9.5px;letter-spacing:-0.3px;color:#444;">12</div>
<div style="left:559.96px;top:11.0px;width:1px;height:1.500px;background:#555"></div>
<div style="left:568.92px;top:9.5px;width:1px;height:4.500px;background:#666"></div>
<div style="left:577.89px;top:11.0px;width:1px;height:1.500px;background:#555"></div>
<div class="t" style="left:582.37px;top:6.46px;font-size:9.5px;letter-spacing:-0.3px;color:#444;">13</div>
<div style="left:595.81px;top:11.0px;width:1px;height:1.500px;background:#555"></div>
<div style="left:604.77px;top:9.5px;width:1px;height:4.500px;background:#666"></div>
<div style="left:613.74px;top:11.0px;width:1px;height:1.500px;background:#555"></div>
<div class="t" style="left:618.22px;top:6.46px;font-size:9.5px;letter-spacing:-0.3px;color:#444;">14</div>
<div style="left:631.66px;top:11.0px;width:1px;height:1.500px;background:#555"></div>
<div style="left:640.62px;top:9.5px;width:1px;height:4.500px;background:#666"></div>
<div style="left:649.59px;top:11.0px;width:1px;height:1.500px;background:#555"></div>
<div class="t" style="left:654.07px;top:6.46px;font-size:9.5px;letter-spacing:-0.3px;color:#444;">15</div>
<div style="left:667.51px;top:11.0px;width:1px;height:1.500px;background:#555"></div>
<div style="left:676.48px;top:9.5px;width:1px;height:4.500px;background:#666"></div>
<div style="left:685.44px;top:11.0px;width:1px;height:1.500px;background:#555"></div>
<div class="t" style="left:689.92px;top:6.46px;font-size:9.5px;letter-spacing:-0.3px;color:#444;">16</div>
<div style="left:703.36px;top:11.0px;width:1px;height:1.500px;background:#555"></div>
<div style="left:712.32px;top:9.5px;width:1px;height:4.500px;background:#666"></div>
<div style="left:721.29px;top:11.0px;width:1px;height:1.500px;background:#555"></div>
<div class="t" style="left:725.77px;top:6.46px;font-size:9.5px;letter-spacing:-0.3px;color:#444;">17</div>
<div style="left:739.21px;top:11.0px;width:1px;height:1.500px;background:#555"></div>
<div style="left:748.17px;top:9.5px;width:1px;height:4.500px;background:#666"></div>
<div style="left:757.14px;top:11.0px;width:1px;height:1.500px;background:#555"></div>
<div class="t" style="left:761.62px;top:6.46px;font-size:9.5px;letter-spacing:-0.3px;color:#444;">18</div>
<div style="left:775.06px;top:11.0px;width:1px;height:1.500px;background:#555"></div>
<div style="left:784.02px;top:9.5px;width:1px;height:4.500px;background:#666"></div>
<div style="left:792.99px;top:11.0px;width:1px;height:1.500px;background:#555"></div>
<div class="t" style="left:797.47px;top:6.46px;font-size:9.5px;letter-spacing:-0.3px;color:#444;">19</div>
<svg style="left:116.5px;top:2.5px" width="10" height="8" viewBox="0 0 10 8"><path d="M0.500 0.500h9v3l-4.500 4-4.500-4z" fill="#fff" stroke="#8a8a8a" stroke-width="1"/></svg>
<svg style="left:162.5px;top:10.5px" width="10" height="13" viewBox="0 0 10 13"><path d="M0.500 7.500v-3l4.500-4 4.500 4v3zM0.500 7.500h9v5h-9z" fill="#fff" stroke="#8a8a8a" stroke-width="1"/></svg>
<svg style="left:709px;top:10.0px" width="10" height="8" viewBox="0 0 10 8"><path d="M0.500 7.500v-3l4.500-4 4.500 4v3z" fill="#fff" stroke="#8a8a8a" stroke-width="1"/></svg>
</div>
<div id="doc">
<div style="left:5px;top:4px;width:10.500px;height:479.5px;background:#fff"></div>
<div class="t" style="left:8.02px;top:2.30px;font-size:10px;color:#444;width:5.56px;transform:rotate(-90deg);">6</div>
<div style="left:10.8px;top:15.43px;width:1.500px;height:1.200px;background:#555"></div>
<div style="left:9.4px;top:24.42px;width:5px;height:1px;background:#666"></div>
<div style="left:10.8px;top:33.40px;width:1.500px;height:1.200px;background:#555"></div>
<div class="t" style="left:8.02px;top:38.23px;font-size:10px;color:#444;width:5.56px;transform:rotate(-90deg);">7</div>
<div style="left:10.8px;top:51.36px;width:1.500px;height:1.200px;background:#555"></div>
<div style="left:9.4px;top:60.35px;width:5px;height:1px;background:#666"></div>
<div style="left:10.8px;top:69.33px;width:1.500px;height:1.200px;background:#555"></div>
<div class="t" style="left:8.02px;top:74.16px;font-size:10px;color:#444;width:5.56px;transform:rotate(-90deg);">8</div>
<div style="left:10.8px;top:87.29px;width:1.500px;height:1.200px;background:#555"></div>
<div style="left:9.4px;top:96.27px;width:5px;height:1px;background:#666"></div>
<div style="left:10.8px;top:105.26px;width:1.500px;height:1.200px;background:#555"></div>
<div class="t" style="left:8.02px;top:110.09px;font-size:10px;color:#444;width:5.56px;transform:rotate(-90deg);">9</div>
<div style="left:10.8px;top:123.22px;width:1.500px;height:1.200px;background:#555"></div>
<div style="left:9.4px;top:132.20px;width:5px;height:1px;background:#666"></div>
<div style="left:10.8px;top:141.19px;width:1.500px;height:1.200px;background:#555"></div>
<div class="t" style="left:5.24px;top:146.02px;font-size:10px;color:#444;width:11.12px;transform:rotate(-90deg);letter-spacing:-0.3px;">10</div>
<div style="left:10.8px;top:159.15px;width:1.500px;height:1.200px;background:#555"></div>
<div style="left:9.4px;top:168.13px;width:5px;height:1px;background:#666"></div>
<div style="left:10.8px;top:177.12px;width:1.500px;height:1.200px;background:#555"></div>
<div class="t" style="left:5.61px;top:181.95px;font-size:10px;color:#444;width:10.38px;transform:rotate(-90deg);letter-spacing:-0.3px;">11</div>
<div style="left:10.8px;top:195.08px;width:1.500px;height:1.200px;background:#555"></div>
<div style="left:9.4px;top:204.06px;width:5px;height:1px;background:#666"></div>
<div style="left:10.8px;top:213.05px;width:1.500px;height:1.200px;background:#555"></div>
<div class="t" style="left:5.24px;top:217.88px;font-size:10px;color:#444;width:11.12px;transform:rotate(-90deg);letter-spacing:-0.3px;">12</div>
<div style="left:10.8px;top:231.01px;width:1.500px;height:1.200px;background:#555"></div>
<div style="left:9.4px;top:239.99px;width:5px;height:1px;background:#666"></div>
<div style="left:10.8px;top:248.98px;width:1.500px;height:1.200px;background:#555"></div>
<div class="t" style="left:5.24px;top:253.81px;font-size:10px;color:#444;width:11.12px;transform:rotate(-90deg);letter-spacing:-0.3px;">13</div>
<div style="left:10.8px;top:266.94px;width:1.500px;height:1.200px;background:#555"></div>
<div style="left:9.4px;top:275.92px;width:5px;height:1px;background:#666"></div>
<div style="left:10.8px;top:284.91px;width:1.500px;height:1.200px;background:#555"></div>
<div class="t" style="left:5.24px;top:289.74px;font-size:10px;color:#444;width:11.12px;transform:rotate(-90deg);letter-spacing:-0.3px;">14</div>
<div style="left:10.8px;top:302.87px;width:1.500px;height:1.200px;background:#555"></div>
<div style="left:9.4px;top:311.85px;width:5px;height:1px;background:#666"></div>
<div style="left:10.8px;top:320.84px;width:1.500px;height:1.200px;background:#555"></div>
<div class="t" style="left:5.24px;top:325.67px;font-size:10px;color:#444;width:11.12px;transform:rotate(-90deg);letter-spacing:-0.3px;">15</div>
<div style="left:10.8px;top:338.80px;width:1.500px;height:1.200px;background:#555"></div>
<div style="left:9.4px;top:347.78px;width:5px;height:1px;background:#666"></div>
<div style="left:10.8px;top:356.77px;width:1.500px;height:1.200px;background:#555"></div>
<div class="t" style="left:5.24px;top:361.60px;font-size:10px;color:#444;width:11.12px;transform:rotate(-90deg);letter-spacing:-0.3px;">16</div>
<div style="left:10.8px;top:374.73px;width:1.500px;height:1.200px;background:#555"></div>
<div style="left:9.4px;top:383.72px;width:5px;height:1px;background:#666"></div>
<div style="left:10.8px;top:392.70px;width:1.500px;height:1.200px;background:#555"></div>
<div class="t" style="left:5.24px;top:397.53px;font-size:10px;color:#444;width:11.12px;transform:rotate(-90deg);letter-spacing:-0.3px;">17</div>
<div style="left:10.8px;top:410.66px;width:1.500px;height:1.200px;background:#555"></div>
<div style="left:9.4px;top:419.64px;width:5px;height:1px;background:#666"></div>
<div style="left:10.8px;top:428.63px;width:1.500px;height:1.200px;background:#555"></div>
<div class="t" style="left:5.24px;top:433.46px;font-size:10px;color:#444;width:11.12px;transform:rotate(-90deg);letter-spacing:-0.3px;">18</div>
<div style="left:10.8px;top:446.59px;width:1.500px;height:1.200px;background:#555"></div>
<div style="left:9.4px;top:455.58px;width:5px;height:1px;background:#666"></div>
<div style="left:10.8px;top:464.56px;width:1.500px;height:1.200px;background:#555"></div>
<div class="t" style="left:5.24px;top:469.39px;font-size:10px;color:#444;width:11.12px;transform:rotate(-90deg);letter-spacing:-0.3px;">19</div>
<div style="left:31px;top:4.5px;width:773.600px;height:463.5px;background:#fff;border-left:1px solid #c8c8c8;border-right:1px solid #c8c8c8;border-top:1px solid #d8d8d8"></div>
<div class="t" style="left:122.25px;top:18.76px;font-size:16px;font-weight:bold;letter-spacing:0.269px;color:#4472c4;">Fun with fonts</div>
<div class="t" style="left:149.80px;top:39.18px;font-size:15.5px;letter-spacing:-0.75px;color:#1c1c1c;">This</div>
<div class="t" style="left:180.80px;top:39.18px;font-size:15.5px;letter-spacing:0.19px;color:#1c1c1c;">document</div>
<div class="t" style="left:254.70px;top:39.18px;font-size:15.5px;letter-spacing:-0.75px;color:#1c1c1c;">has</div>
<div class="t" style="left:281.40px;top:39.18px;font-size:15.5px;letter-spacing:0.021px;color:#1c1c1c;">embedded</div>
<div class="t" style="left:359.30px;top:39.18px;font-size:15.5px;letter-spacing:0.326px;color:#1c1c1c;">the</div>
<div class="t" style="left:386.00px;top:39.18px;font-size:15.5px;letter-spacing:-0.116px;color:#1c1c1c;">Ubuntu</div>
<div class="t" style="left:439.90px;top:39.18px;font-size:15.5px;letter-spacing:0.7px;color:#1c1c1c;">font</div>
<div class="t" style="left:473.40px;top:39.18px;font-size:15.5px;letter-spacing:0.511px;color:#1c1c1c;">family.</div>
<div class="t" style="left:524.60px;top:39.18px;font-size:15.5px;letter-spacing:-0.75px;color:#1c1c1c;">The</div>
<div class="t" style="left:553.40px;top:39.18px;font-size:15.5px;letter-spacing:-0.27px;color:#1c1c1c;">body</div>
<div class="t" style="left:590.70px;top:39.18px;font-size:15.5px;letter-spacing:0.672px;color:#1c1c1c;">text</div>
<div class="t" style="left:622.20px;top:39.18px;font-size:15.5px;letter-spacing:-0.75px;color:#1c1c1c;">is</div>
<div class="t" style="left:636.90px;top:39.18px;font-size:15.5px;letter-spacing:0.7px;color:#1c1c1c;">in</div>
<div class="t" style="left:655.40px;top:39.18px;font-size:15.5px;letter-spacing:-0.574px;color:#1c1c1c;">the</div>
<div class="t" style="left:122.70px;top:59.18px;font-size:15.5px;letter-spacing:0.004px;color:#1c1c1c;">Ubuntu</div>
<div class="t" style="left:177.20px;top:59.18px;font-size:15.5px;letter-spacing:0.087px;color:#1c1c1c;">typeface,</div>
<div class="t" style="left:245.30px;top:59.18px;font-size:15.5px;letter-spacing:-0.408px;color:#1c1c1c;">here</div>
<div class="t" style="left:279.60px;top:59.18px;font-size:15.5px;letter-spacing:-0.75px;color:#1c1c1c;">is</div>
<div class="t" style="left:425.70px;top:79.18px;font-size:15.5px;letter-spacing:-0.73px;color:#1c1c1c;">Every</div>
<div class="t" style="left:466.90px;top:79.18px;font-size:15.5px;letter-spacing:-0.008px;color:#1c1c1c;">embedded</div>
<div class="t" style="left:544.60px;top:79.18px;font-size:15.5px;letter-spacing:0.7px;color:#1c1c1c;">font</div>
<div class="t" style="left:578.40px;top:79.18px;font-size:15.5px;letter-spacing:0.558px;color:#1c1c1c;">will</div>
<div class="t" style="left:606.10px;top:79.18px;font-size:15.5px;letter-spacing:0.195px;color:#1c1c1c;">automatically</div>
<div class="t" style="left:122.70px;top:99.18px;font-size:15.5px;letter-spacing:-0.75px;color:#1c1c1c;">be</div>
<div class="t" style="left:142.90px;top:99.18px;font-size:15.5px;letter-spacing:-0.036px;color:#1c1c1c;">embedded</div>
<div class="t" style="left:220.40px;top:99.18px;font-size:15.5px;letter-spacing:-0.264px;color:#1c1c1c;">in</div>
<div class="t" style="left:236.70px;top:99.18px;font-size:15.5px;letter-spacing:0.476px;color:#1c1c1c;">the</div>
<div class="t" style="left:263.70px;top:99.18px;font-size:15.5px;letter-spacing:0.7px;color:#1c1c1c;">output</div>
<div class="t" style="left:314.90px;top:99.18px;font-size:15.5px;letter-spacing:0.042px;color:#1c1c1c;">ebook</div>
<div class="t" style="left:361.80px;top:99.18px;font-size:15.5px;letter-spacing:0.7px;color:#1c1c1c;">during</div>
<div class="t" style="left:413.80px;top:99.18px;font-size:15.5px;letter-spacing:-0.516px;color:#1c1c1c;">conversion.</div>
<div style="left:120.5px;top:152px;width:600.5px;height:59.5px;background:#dcdcdc"></div>
<div style="left:721px;top:152px;width:1px;height:60.5px;background:#222"></div>
<div class="t" style="left:161.10px;top:154.18px;font-size:15.5px;letter-spacing:0.022px;color:#1c1c1c;">You</div>
<div class="t" style="left:191.80px;top:154.18px;font-size:15.5px;letter-spacing:-0.75px;color:#1c1c1c;">can</div>
<div class="t" style="left:218.40px;top:154.18px;font-size:15.5px;letter-spacing:-0.041px;color:#1c1c1c;">do</div>
<div class="t" style="left:240.10px;top:154.18px;font-size:15.5px;letter-spacing:-0.658px;color:#1c1c1c;">crazy</div>
<div class="t" style="left:279.00px;top:154.18px;font-size:15.5px;letter-spacing:-0.012px;color:#1c1c1c;">things</div>
<div class="t" style="left:324.80px;top:154.18px;font-size:15.5px;letter-spacing:0.7px;color:#1c1c1c;">with</div>
<div class="t" style="left:359.10px;top:154.18px;font-size:15.5px;letter-spacing:-0.272px;color:#1c1c1c;">paragraphs,</div>
<div class="t" style="left:443.60px;top:154.18px;font-size:15.5px;letter-spacing:0.7px;color:#1c1c1c;">if</div>
<div class="t" style="left:457.40px;top:154.18px;font-size:15.5px;letter-spacing:0.276px;color:#1c1c1c;">the</div>
<div class="t" style="left:484.00px;top:154.18px;font-size:15.5px;letter-spacing:-0.041px;color:#1c1c1c;">urge</div>
<div class="t" style="left:519.40px;top:154.18px;font-size:15.5px;letter-spacing:0.07px;color:#1c1c1c;">strikes</div>
<div class="t" style="left:569.10px;top:154.18px;font-size:15.5px;letter-spacing:-0.199px;color:#1c1c1c;">you.</div>
<div class="t" style="left:602.30px;top:154.18px;font-size:15.5px;letter-spacing:-0.75px;color:#1c1c1c;">For</div>
<div class="t" style="left:628.30px;top:154.18px;font-size:15.5px;letter-spacing:-0.133px;color:#1c1c1c;">instance</div>
<div class="t" style="left:689.60px;top:154.18px;font-size:15.5px;letter-spacing:0.193px;color:#1c1c1c;">this</div>
<div class="t" style="left:148.50px;top:174.18px;font-size:15.5px;letter-spacing:-0.071px;color:#1c1c1c;">paragraph</div>
<div class="t" style="left:223.10px;top:174.18px;font-size:15.5px;letter-spacing:-0.75px;color:#1c1c1c;">is</div>
<div class="t" style="left:237.60px;top:174.18px;font-size:15.5px;letter-spacing:0.537px;color:#1c1c1c;">right</div>
<div class="t" style="left:274.40px;top:174.18px;font-size:15.5px;letter-spacing:-0.198px;color:#1c1c1c;">aligned</div>
<div class="t" style="left:327.70px;top:174.18px;font-size:15.5px;letter-spacing:-0.181px;color:#1c1c1c;">and</div>
<div class="t" style="left:357.70px;top:174.18px;font-size:15.5px;letter-spacing:-0.75px;color:#1c1c1c;">has</div>
<div class="t" style="left:384.10px;top:175.03px;font-size:14.5px;letter-spacing:0px;color:#1c1c1c;">a</div>
<div class="t" style="left:395.20px;top:174.18px;font-size:15.5px;letter-spacing:0.562px;color:#1c1c1c;">right</div>
<div class="t" style="left:432.10px;top:174.18px;font-size:15.5px;letter-spacing:0.341px;color:#1c1c1c;">border.</div>
<div class="t" style="left:486.90px;top:174.18px;font-size:15.5px;letter-spacing:0.7px;color:#1c1c1c;">It</div>
<div class="t" style="left:501.40px;top:174.18px;font-size:15.5px;letter-spacing:-0.75px;color:#1c1c1c;">has</div>
<div class="t" style="left:527.70px;top:174.18px;font-size:15.5px;letter-spacing:-0.545px;color:#1c1c1c;">also</div>
<div class="t" style="left:559.00px;top:174.18px;font-size:15.5px;letter-spacing:-0.361px;color:#1c1c1c;">been</div>
<div class="t" style="left:596.90px;top:174.18px;font-size:15.5px;letter-spacing:-0.189px;color:#1c1c1c;">given</div>
<div class="t" style="left:637.40px;top:175.03px;font-size:14.5px;letter-spacing:0px;color:#1c1c1c;">a</div>
<div class="t" style="left:649.20px;top:174.18px;font-size:15.5px;letter-spacing:0.591px;color:#1c1c1c;">light</div>
<div class="t" style="left:684.50px;top:174.18px;font-size:15.5px;letter-spacing:-0.118px;color:#1c1c1c;">gray</div>
<div class="t" style="left:629.40px;top:194.18px;font-size:15.5px;letter-spacing:-0.041px;color:#1c1c1c;">background.</div>
<div class="t" style="left:122.70px;top:251.18px;font-size:15.5px;letter-spacing:-0.675px;color:#1c1c1c;">For</div>
<div class="t" style="left:149.10px;top:251.18px;font-size:15.5px;letter-spacing:0.476px;color:#1c1c1c;">the</div>
<div class="t" style="left:176.10px;top:251.18px;font-size:15.5px;letter-spacing:-0.369px;color:#1c1c1c;">lovers</div>
<div class="t" style="left:220.10px;top:251.18px;font-size:15.5px;letter-spacing:0.7px;color:#1c1c1c;">of</div>
<div class="t" style="left:239.20px;top:251.18px;font-size:15.5px;letter-spacing:0.224px;color:#1c1c1c;">poetry</div>
<div class="t" style="left:287.90px;top:251.18px;font-size:15.5px;letter-spacing:0.042px;color:#1c1c1c;">amongst</div>
<div class="t" style="left:352.10px;top:251.18px;font-size:15.5px;letter-spacing:-0.466px;color:#1c1c1c;">you,</div>
<div class="t" style="left:384.50px;top:251.18px;font-size:15.5px;letter-spacing:-0.268px;color:#1c1c1c;">paragraphs</div>
<div class="t" style="left:465.00px;top:251.18px;font-size:15.5px;letter-spacing:0.7px;color:#1c1c1c;">with</div>
<div class="t" style="left:499.70px;top:251.18px;font-size:15.5px;letter-spacing:-0.128px;color:#1c1c1c;">hanging</div>
<div class="t" style="left:558.60px;top:251.18px;font-size:15.5px;letter-spacing:-0.041px;color:#1c1c1c;">indents,</div>
<div class="t" style="left:617.10px;top:251.18px;font-size:15.5px;letter-spacing:0.314px;color:#1c1c1c;">like</div>
<div class="t" style="left:645.80px;top:251.18px;font-size:15.5px;letter-spacing:-0.24px;color:#1c1c1c;">this</div>
<div class="t" style="left:673.70px;top:251.18px;font-size:15.5px;letter-spacing:0.7px;color:#1c1c1c;">often</div>
<div class="t" style="left:167.80px;top:271.18px;font-size:15.5px;letter-spacing:-0.301px;color:#1c1c1c;">come</div>
<div class="t" style="left:209.30px;top:271.18px;font-size:15.5px;letter-spacing:-0.75px;color:#1c1c1c;">in</div>
<div class="t" style="left:224.80px;top:271.18px;font-size:15.5px;letter-spacing:-0.238px;color:#1c1c1c;">handy.</div>
<div class="t" style="left:273.50px;top:271.18px;font-size:15.5px;letter-spacing:-0.028px;color:#1c1c1c;">You</div>
<div class="t" style="left:304.10px;top:271.18px;font-size:15.5px;letter-spacing:-0.75px;color:#1c1c1c;">can</div>
<div class="t" style="left:331.20px;top:271.18px;font-size:15.5px;letter-spacing:-0.75px;color:#1c1c1c;">use</div>
<div class="t" style="left:358.90px;top:271.18px;font-size:15.5px;letter-spacing:-0.294px;color:#1c1c1c;">hanging</div>
<div class="t" style="left:416.80px;top:271.18px;font-size:15.5px;letter-spacing:0.203px;color:#1c1c1c;">indents</div>
<div class="t" style="left:472.50px;top:271.18px;font-size:15.5px;letter-spacing:0.7px;color:#1c1c1c;">to</div>
<div class="t" style="left:491.10px;top:271.18px;font-size:15.5px;letter-spacing:-0.239px;color:#1c1c1c;">ensure</div>
<div class="t" style="left:541.80px;top:271.18px;font-size:15.5px;letter-spacing:0.682px;color:#1c1c1c;">that</div>
<div class="t" style="left:573.90px;top:272.03px;font-size:14.5px;letter-spacing:0px;color:#1c1c1c;">a</div>
<div class="t" style="left:586.10px;top:271.18px;font-size:15.5px;letter-spacing:-0.109px;color:#1c1c1c;">line</div>
<div class="t" style="left:614.40px;top:271.18px;font-size:15.5px;letter-spacing:0.7px;color:#1c1c1c;">of</div>
<div class="t" style="left:633.10px;top:271.18px;font-size:15.5px;letter-spacing:0.504px;color:#1c1c1c;">poetry</div>
<div class="t" style="left:167.80px;top:291.18px;font-size:15.5px;letter-spacing:0.096px;color:#1c1c1c;">retains</div>
<div class="t" style="left:219.40px;top:291.18px;font-size:15.5px;letter-spacing:-0.1px;color:#1c1c1c;">its</div>
<div class="t" style="left:239.20px;top:291.18px;font-size:15.5px;letter-spacing:-0.27px;color:#1c1c1c;">individual</div>
<div class="t" style="left:305.90px;top:291.18px;font-size:15.5px;letter-spacing:0.7px;color:#1c1c1c;">identity</div>
<div class="t" style="left:365.40px;top:291.18px;font-size:15.5px;letter-spacing:-0.75px;color:#1c1c1c;">as</div>
<div class="t" style="left:384.20px;top:292.03px;font-size:14.5px;letter-spacing:0px;color:#1c1c1c;">a</div>
<div class="t" style="left:395.40px;top:291.18px;font-size:15.5px;letter-spacing:0.024px;color:#1c1c1c;">line</div>
<div class="t" style="left:424.10px;top:291.18px;font-size:15.5px;letter-spacing:-0.537px;color:#1c1c1c;">even</div>
<div class="t" style="left:460.60px;top:291.18px;font-size:15.5px;letter-spacing:0.182px;color:#1c1c1c;">when</div>
<div class="t" style="left:502.70px;top:291.18px;font-size:15.5px;letter-spacing:0.026px;color:#1c1c1c;">the</div>
<div class="t" style="left:528.80px;top:291.18px;font-size:15.5px;letter-spacing:-0.225px;color:#1c1c1c;">screen</div>
<div class="t" style="left:578.70px;top:291.18px;font-size:15.5px;letter-spacing:0.7px;color:#1c1c1c;">is</div>
<div class="t" style="left:595.80px;top:291.18px;font-size:15.5px;letter-spacing:0.7px;color:#1c1c1c;">too</div>
<div class="t" style="left:623.80px;top:291.18px;font-size:15.5px;letter-spacing:0.344px;color:#1c1c1c;">narrow</div>
<div class="t" style="left:677.40px;top:291.18px;font-size:15.5px;letter-spacing:0.273px;color:#1c1c1c;">to</div>
<div class="t" style="left:167.80px;top:311.18px;font-size:15.5px;letter-spacing:-0.491px;color:#1c1c1c;">display</div>
<div class="t" style="left:217.60px;top:311.18px;font-size:15.5px;letter-spacing:0.7px;color:#1c1c1c;">it</div>
<div class="t" style="left:232.00px;top:311.18px;font-size:15.5px;letter-spacing:-0.75px;color:#1c1c1c;">as</div>
<div class="t" style="left:250.40px;top:312.03px;font-size:14.5px;letter-spacing:0px;color:#1c1c1c;">a</div>
<div class="t" style="left:261.90px;top:311.18px;font-size:15.5px;letter-spacing:-0.2px;color:#1c1c1c;">single</div>
<div class="t" style="left:305.90px;top:311.18px;font-size:15.5px;letter-spacing:0.066px;color:#1c1c1c;">line.</div>
<div class="t" style="left:339.10px;top:311.18px;font-size:15.5px;letter-spacing:0.64px;color:#1c1c1c;">Not</div>
<div class="t" style="left:369.00px;top:311.18px;font-size:15.5px;letter-spacing:-0.145px;color:#1c1c1c;">only</div>
<div class="t" style="left:401.50px;top:311.18px;font-size:15.5px;letter-spacing:-0.704px;color:#1c1c1c;">does</div>
<div class="t" style="left:437.50px;top:311.18px;font-size:15.5px;letter-spacing:0.027px;color:#1c1c1c;">this</div>
<div class="t" style="left:466.20px;top:311.18px;font-size:15.5px;letter-spacing:-0.221px;color:#1c1c1c;">paragraph</div>
<div class="t" style="left:539.60px;top:311.18px;font-size:15.5px;letter-spacing:0.063px;color:#1c1c1c;">have</div>
<div class="t" style="left:577.60px;top:312.03px;font-size:14.5px;letter-spacing:0px;color:#1c1c1c;">a</div>
<div class="t" style="left:589.10px;top:311.18px;font-size:15.5px;letter-spacing:-0.011px;color:#1c1c1c;">hanging</div>
<div class="t" style="left:648.70px;top:311.18px;font-size:15.5px;letter-spacing:0.077px;color:#1c1c1c;">indent,</div>
<div class="t" style="left:700.20px;top:311.18px;font-size:15.5px;letter-spacing:0.7px;color:#1c1c1c;">it</div>
<div class="t" style="left:167.80px;top:331.68px;font-size:15.5px;letter-spacing:-0.75px;color:#1c1c1c;">is</div>
<div class="t" style="left:181.50px;top:331.68px;font-size:15.5px;letter-spacing:-0.412px;color:#1c1c1c;">also</div>
<div class="t" style="left:213.20px;top:331.68px;font-size:15.5px;letter-spacing:-0.75px;color:#1c1c1c;">has</div>
<div class="t" style="left:239.90px;top:331.68px;font-size:15.5px;letter-spacing:-0.75px;color:#1c1c1c;">an</div>
<div class="t" style="left:260.10px;top:331.68px;font-size:15.5px;letter-spacing:0.185px;color:#1c1c1c;">extra</div>
<div class="t" style="left:299.80px;top:331.68px;font-size:15.5px;letter-spacing:0.7px;color:#1c1c1c;">top</div>
<div class="t" style="left:327.60px;top:331.68px;font-size:15.5px;letter-spacing:-0.181px;color:#1c1c1c;">margin,</div>
<div class="t" style="left:382.70px;top:331.68px;font-size:15.5px;letter-spacing:0.389px;color:#1c1c1c;">setting</div>
<div class="t" style="left:435.20px;top:331.68px;font-size:15.5px;letter-spacing:0.7px;color:#1c1c1c;">it</div>
<div class="t" style="left:448.60px;top:331.68px;font-size:15.5px;letter-spacing:0.018px;color:#1c1c1c;">apart</div>
<div class="t" style="left:488.50px;top:331.68px;font-size:15.5px;letter-spacing:0.6px;color:#1c1c1c;">from</div>
<div class="t" style="left:525.80px;top:331.68px;font-size:15.5px;letter-spacing:0.576px;color:#1c1c1c;">the</div>
<div class="t" style="left:553.00px;top:331.68px;font-size:15.5px;letter-spacing:-0.035px;color:#1c1c1c;">preceding</div>
<div class="t" style="left:625.30px;top:331.68px;font-size:15.5px;letter-spacing:-0.119px;color:#1c1c1c;">paragraph.</div>
<div class="t" style="left:294.00px;top:61.19px;font-size:14.5px;font-family:'Liberation Mono',monospace;transform:scaleX(0.8730);transform-origin:0 0;color:#1c1c1c;">some text in the Ubuntu Mono typeface, notice how every</div>
<div class="t" style="left:120.90px;top:81.19px;font-size:14.5px;font-family:'Liberation Mono',monospace;transform:scaleX(0.8685);transform-origin:0 0;color:#1c1c1c;">letter has the same width, even i and m.</div>
<div class="t" style="left:122.25px;top:133.76px;font-size:16px;font-weight:bold;letter-spacing:0.413px;color:#4472c4;">Paragraph level formatting</div>
<div style="left:628.5px;top:166.8px;width:57.5px;height:1px;background:#4a7bd0"></div><div style="left:628.5px;top:168.8px;width:57.5px;height:1px;background:#4a7bd0"></div>
<div style="left:578.5px;top:304.5px;width:41.75px;height:1px;background:#4a7bd0"></div><div style="left:578.5px;top:306.5px;width:41.75px;height:1px;background:#4a7bd0"></div>
<div style="left:213.5px;top:345.29999999999995px;width:22.5px;height:1px;background:#4a7bd0"></div><div style="left:213.5px;top:347.29999999999995px;width:22.5px;height:1px;background:#4a7bd0"></div>
<svg style="left:364.5px;top:93px" width="9.0" height="4" viewBox="0 0 9.0 4" overflow="hidden"><path d="M0 2.500l2 -2l2 2l2 -2l2 2l2 -2" fill="none" stroke="#e03a3a" stroke-width="0.900"/></svg>
<svg style="left:315.5px;top:113px" width="43.0" height="4" viewBox="0 0 43.0 4" overflow="hidden"><path d="M0 2.500l2 -2l2 2l2 -2l2 2l2 -2l2 2l2 -2l2 2l2 -2l2 2l2 -2l2 2l2 -2l2 2l2 -2l2 2l2 -2l2 2l2 -2l2 2l2 -2l2 2" fill="none" stroke="#e03a3a" stroke-width="0.900"/></svg>
<div style="left:156.5px;top:355px;width:242.5px;height:46.200000000000045px;border:3.400px solid #0a0a0a;border-radius:9.500px;background:#fff;box-shadow:0.500px 2.500px 5px rgba(0,0,0,.5),inset 0.500px 1.500px 4px rgba(0,0,0,.38)"></div>
<div style="left:167.6px;top:370.25px;width:218.79999999999998px;height:19.75px;background:#c8c8c8"></div>
<div class="t" style="left:167.75px;top:372.18px;font-size:15.5px;letter-spacing:0.121px;color:#111;">Как показано на изображении</div>
<div style="left:815px;top:5px;width:15px;height:463px;background:#d6d6d6"></div>
<div style="left:815.3px;top:7px;width:13.5px;height:14.3px;background:#fff;border:1px solid #d0d0d0"></div><svg style="left:815.3px;top:7px" width="13.5" height="14.3" viewBox="0 0 13.5 14.3"><path d="M3.500 8.800l3.250-3.500 3.250 3.500z" fill="#666"/></svg>
<div style="left:815.3px;top:84.19999999999999px;width:13.500px;height:20px;background:#fff;border:1px solid #d0d0d0"></div>
<div style="left:815.3px;top:452px;width:13.5px;height:14.3px;background:#fff;border:1px solid #d0d0d0"></div><svg style="left:815.3px;top:452px" width="13.5" height="14.3" viewBox="0 0 13.5 14.3"><path d="M3.500 5.500l3.250 3.500 3.250-3.500z" fill="#666"/></svg>
</div>
<div id="hscroll" style="left:1px;top:639px;width:830px;height:16px">
<div style="left:40px;top:1px;width:758px;height:14.500px;background:#d4d4d4"></div>
<div style="left:25px;top:1px;width:14.3px;height:14.5px;background:#fff;border:1px solid #c8c8c8"></div><svg style="left:25px;top:1px" width="14.3" height="14.5" viewBox="0 0 14.3 14.5"><path d="M9 4l-3.500 3.250 3.500 3.250z" fill="#666"/></svg>
<div style="left:49px;top:1px;width:738px;height:14.500px;background:#fff;border:1px solid #c0c0c0"></div>
<div style="left:798px;top:1px;width:14.3px;height:14.5px;background:#fff;border:1px solid #c8c8c8"></div><svg style="left:798px;top:1px" width="14.3" height="14.5" viewBox="0 0 14.3 14.5"><path d="M5.500 4l3.500 3.250-3.500 3.250z" fill="#666"/></svg>
</div>
<div id="status">
<div class="t" style="left:8.00px;top:5.19px;font-size:11px;letter-spacing:-0.157px;color:#4d4d4d;">Страница 2 из 9</div>
<div class="t" style="left:106.50px;top:5.19px;font-size:11px;letter-spacing:-0.278px;color:#4d4d4d;">Слово 4 из 1646</div>
<svg style="left:204px;top:3.7999999999999545px" width="14" height="12" viewBox="0 0 14 12" fill="none" stroke="#4d4d4d" stroke-width="1"><path d="M6 10.500h-5.500v-10h5.200c0.800 0 1.300 0.500 1.300 1.300v4"/><path d="M7 1.800c0-0.800 0.500-1.300 1.300-1.300h4.200v6"/><path d="M8 7l5 5M13 7l-5 5"/></svg>
<div class="t" style="left:234.75px;top:5.19px;font-size:11px;letter-spacing:-0.120px;color:#4d4d4d;">русский</div>
<svg style="left:344px;top:3.7999999999999545px" width="14" height="12" viewBox="0 0 14 12" fill="none" stroke="#4d4d4d" stroke-width="1"><path d="M5 10.500h-4.500v-10h12v4.500"/><path d="M0.500 2.800h12"/><path d="M2.500 5h4M2.500 7h2.500"/><circle cx="10" cy="8.300" r="3.200"/><circle cx="10" cy="8.300" r="1.400" fill="#4d4d4d"/></svg>
<svg style="left:439px;top:2.7999999999999545px" width="14" height="13" viewBox="0 0 14 13" fill="none" stroke="#4d4d4d" stroke-width="1"><path d="M0.500 3v-2.500h2.500M11 0.500h2.500v2.500M13.500 10v2.500h-2.500M3 12.500h-2.500v-2.500"/><path d="M3.500 2.500h5l2.500 2.500v5.500h-7.500z"/><path d="M8.300 2.700v2.500h2.500"/></svg>
<div class="t" style="left:454.75px;top:5.19px;font-size:11px;letter-spacing:-0.019px;color:#4d4d4d;">Фокусировка</div>
<svg style="left:544px;top:2.7999999999999545px" width="14" height="12.500" viewBox="0 0 14 12" preserveAspectRatio="none" fill="none" stroke="#4d4d4d" stroke-width="1"><path d="M7 1.500c-1.500-1-4-1.300-6.500-1v9.500c2.500-0.300 5 0 6.500 1.200 1.500-1.200 4-1.500 6.500-1.200v-9.500c-2.500-0.300-5 0-6.500 1zM7 1.500v9.700"/><path d="M2.300 3h3M2.300 5h3M2.300 7h3M8.700 3h3M8.700 5h3M8.700 7h3" stroke-width="0.800"/></svg>
<div style="left:570.25px;top:-1px;width:37.75px;height:21px;background:#c8c8c8"></div>
<svg style="left:583.5px;top:2.7999999999999545px" width="11" height="13" viewBox="0 0 11 13" fill="none" stroke="#4d4d4d" stroke-width="1"><rect x="0.500" y="0.500" width="10" height="12"/><path d="M2.500 3.200h6M2.500 5.400h6M2.500 7.600h6M2.500 9.800h6" stroke-width="0.800"/></svg>
<svg style="left:620px;top:2.6000000000000227px" width="15" height="13" viewBox="0 0 15 13" fill="none" stroke="#4d4d4d" stroke-width="1"><path d="M6 11.500h-5.500v-11h11v5"/><path d="M0.500 2.800h11"/><path d="M2.500 5h5M2.500 7h3M2.500 9h2.500"/><circle cx="10.500" cy="9" r="3.300" fill="#4d4d4d"/><path d="M10.500 7v4M8.500 9h4" stroke="#f3f2f1" stroke-width="0.800"/></svg>
<div style="left:652px;top:9px;width:7px;height:1px;background:#5a5a5a"></div>
<div style="left:664px;top:9px;width:94.5px;height:1px;background:#a6a6a6"></div>
<div style="left:709.6px;top:4.5px;width:4.500px;height:10.500px;background:#666"></div>
<div style="left:763.75px;top:9px;width:7.500px;height:1px;background:#5a5a5a"></div>
<div style="left:767px;top:5.5px;width:1px;height:7.500px;background:#5a5a5a"></div>
<div class="t" style="left:784.30px;top:5.19px;font-size:11px;letter-spacing:-1.177px;color:#4d4d4d;">100</div>
<div class="t" style="left:803.30px;top:5.19px;font-size:11px;transform:scaleX(0.8691);transform-origin:0 0;color:#4d4d4d;">%</div>
</div>
</div>
</body>
</html>
